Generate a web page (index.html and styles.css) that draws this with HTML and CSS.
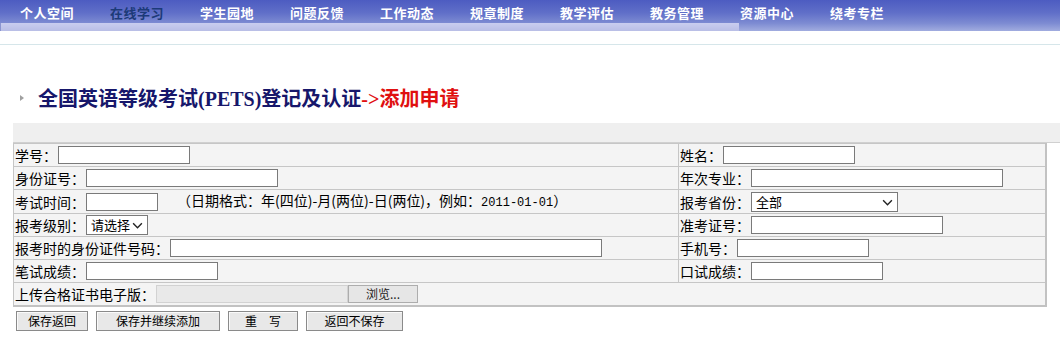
FILE: index.html
```html
<!DOCTYPE html>
<html lang="zh-CN">
<head>
  <meta charset="UTF-8" />
  <title>全国英语等级考试(PETS)登记及认证</title>
  <link rel="stylesheet" href="styles.css">
</head>
<body>
  <div class="nav">
    <ul class="menu">
      <li>个人空间</li>
      <li class="active">在线学习</li>
      <li>学生园地</li>
      <li>问题反馈</li>
      <li>工作动态</li>
      <li>规章制度</li>
      <li>教学评估</li>
      <li>教务管理</li>
      <li>资源中心</li>
      <li>绕考专栏</li>
    </ul>
    <div class="strip"><span class="strip-light"></span></div>
  </div>
  <div class="rule"></div>

  <h2 class="title">
    <span class="arrow"></span>全国英语等级考试(PETS)登记及认证<span class="sub">-&gt;添加申请</span>
  </h2>

  <div class="form-head"></div>
  <table class="form">
    <tr>
      <td class="left"><div class="field">学号：<input class="txt short" type="text"></div></td>
      <td><div class="field">姓名：<input class="txt short" type="text"></div></td>
    </tr>
    <tr>
      <td class="left"><div class="field">身份证号：<input class="txt mid" type="text"></div></td>
      <td><div class="field">年次专业：<input class="txt long" type="text"></div></td>
    </tr>
    <tr>
      <td class="left">
        <div class="field">考试时间：<input class="txt tiny" type="text">
          <span class="hint">（日期格式：年(四位)-月(两位)-日(两位)，例如：<span class="num">2011-01-01</span>）</span>
        </div>
      </td>
      <td>
        <div class="field">报考省份：<span class="sel wide">全部<svg class="chev" viewBox="0 0 12 8"><path d="M1 1.5 6 6.5 11 1.5" /></svg></span></div>
      </td>
    </tr>
    <tr>
      <td class="left">
        <div class="field">报考级别：<span class="sel">请选择<svg class="chev" viewBox="0 0 12 8"><path d="M1 1.5 6 6.5 11 1.5" /></svg></span></div>
      </td>
      <td><div class="field">准考证号：<input class="txt mid" type="text"></div></td>
    </tr>
    <tr>
      <td class="left"><div class="field">报考时的身份证件号码：<input class="txt xlong" type="text"></div></td>
      <td><div class="field">手机号：<input class="txt short" type="text"></div></td>
    </tr>
    <tr>
      <td class="left"><div class="field">笔试成绩：<input class="txt short" type="text"></div></td>
      <td><div class="field">口试成绩：<input class="txt short" type="text"></div></td>
    </tr>
    <tr>
      <td colspan="2">
        <div class="field">上传合格证书电子版：<span class="file"><span class="file-path"></span><span class="file-btn">浏览...</span></span></div>
      </td>
    </tr>
  </table>

  <div class="actions">
    <button class="btn b-save">保存返回</button>
    <button class="btn b-more">保存并继续添加</button>
    <button class="btn b-reset">重　写</button>
    <button class="btn b-back">返回不保存</button>
  </div>
</body>
</html>
```

FILE: styles.css
```css
body {
  margin: 0;
  font-family: "Noto Sans CJK SC", sans-serif;
  font-size: 14px;
  color: #000;
  background: #fff;
}
.nav {
  height: 31px;
  background: linear-gradient(#4d5cc1, #5f6ec8 40%, #7d8bd2 75%, #a1acdf);
}
.menu {
  list-style: none;
  margin: 0;
  padding: 0 0 0 20px;
  height: 23px;
  display: flex;
}
.menu li {
  width: 90px;
  flex: none;
  font-size: 13px;
  font-weight: bold;
  line-height: 25px;
  color: #fff;
  letter-spacing: 0.5px;
}
.menu li.active {
  color: #1c3a78;
}
.strip {
  height: 8px;
}
.strip-light {
  display: block;
  width: 739px;
  height: 8px;
  background: linear-gradient(#c9cdef, #b9bee6);
  border-left: 1px solid #8b95d0;
  box-sizing: border-box;
}
.rule {
  margin-top: 13px;
  height: 1px;
  background: #d6e6ea;
}
.title {
  margin: 38px 0 0 0;
  height: 28px;
  display: flex;
  align-items: center;
  font-family: "Liberation Serif", "Noto Sans CJK SC", serif;
  font-size: 20px;
  font-weight: bold;
  color: #17176b;
}
.arrow {
  width: 0;
  height: 0;
  margin: 2px 14px 0 20px;
  border-top: 3px solid transparent;
  border-bottom: 3px solid transparent;
  border-left: 4px solid #a0a0a0;
}
.sub {
  color: #e01010;
  font-weight: bold;
}
.form-head {
  margin: 12px 0 0 13px;
  height: 19px;
  background: #efefef;
  border-bottom: 1px solid #d0d0d0;
}
.form {
  margin-left: 13px;
  width: 1034px;
  border-collapse: collapse;
  background: #f4f4f4;
  border-right: 2px solid #c2c2c2;
  border-bottom: 2px solid #c2c2c2;
}
.form td {
  height: 22px;
  padding: 0 0 0 1px;
  border: 1px solid #c6c6c6;
  vertical-align: middle;
}
.form td.left {
  width: 663px;
}
.field {
  display: flex;
  align-items: center;
  white-space: nowrap;
  line-height: 20px;
}
.txt {
  height: 18px;
  box-sizing: border-box;
  margin: 0 0 0 1px;
  padding: 0 2px;
  border: 1px solid #7a7a7a;
  background: #fff;
  font-size: 12px;
}
.short { width: 132px; }
.mid { width: 192px; }
.tiny { width: 72px; }
.long { width: 252px; }
.xlong { width: 432px; }
.hint {
  margin-left: 19px;
}
.num {
  font-family: "Liberation Mono", monospace;
  font-size: 12px;
}
.sel {
  position: relative;
  display: inline-block;
  width: 62px;
  height: 20px;
  box-sizing: border-box;
  margin-left: 1px;
  padding-left: 4px;
  border: 1px solid #7a7a7a;
  background: #fff;
  font-size: 13px;
  line-height: 18px;
}
.sel.wide {
  width: 147px;
}
.chev {
  position: absolute;
  right: 4px;
  top: 6px;
  width: 11px;
  height: 7px;
  fill: none;
  stroke: #222;
  stroke-width: 1.6;
}
.file {
  display: inline-flex;
  margin-left: 1px;
  height: 18px;
}
.file-path {
  width: 192px;
  box-sizing: border-box;
  background: #e9e9e9;
  border: 1px solid #d2d2d2;
}
.file-btn {
  width: 70px;
  box-sizing: border-box;
  background: #e6e6e6;
  border: 1px solid #adadad;
  font-size: 12px;
  line-height: 16px;
  text-align: center;
  color: #222;
}
.actions {
  margin: 4px 0 0 16px;
  display: flex;
  gap: 8px;
}
.btn {
  height: 20px;
  padding: 0;
  font-family: "Noto Sans CJK SC", sans-serif;
  font-size: 12px;
  line-height: 16px;
  color: #000;
  background: #e8e8e8;
  border: 1px solid #8a8a8a;
  box-shadow: inset 1px 1px 0 #fafafa;
}
.b-save { width: 72px; }
.b-more { width: 124px; }
.b-reset { width: 70px; }
.b-back { width: 97px; }
```
